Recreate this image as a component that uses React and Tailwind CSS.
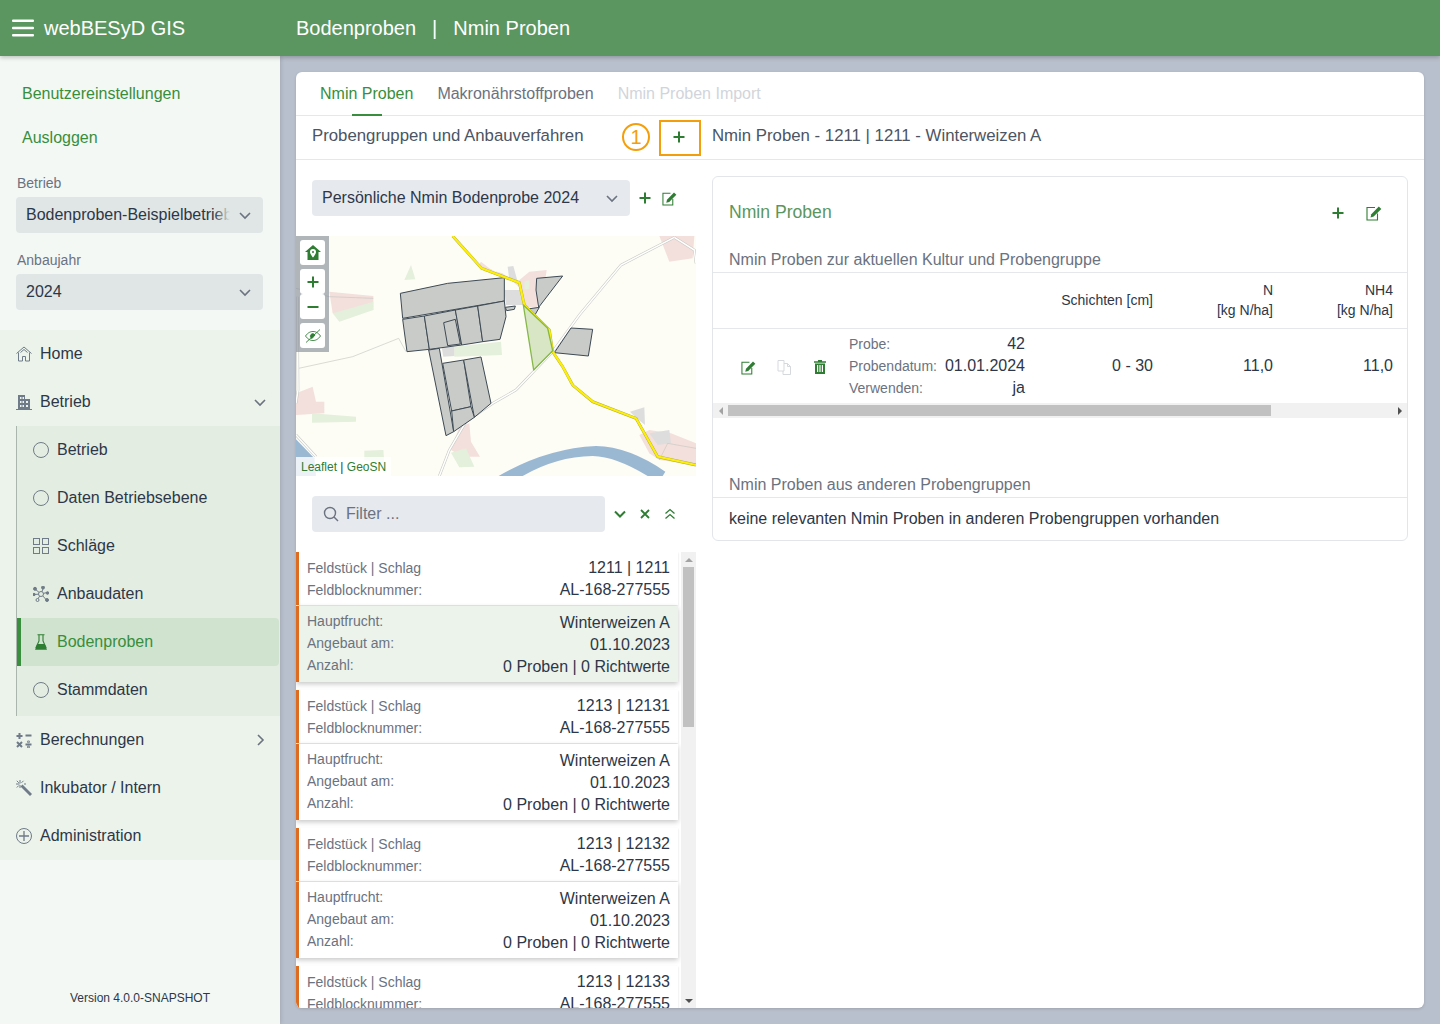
import React from "react";

const G = "#2e7d32";

function Plus({ size = 14, color = G, sw = 2 }) {
  return (
    <svg width={size} height={size} viewBox="0 0 14 14" fill="none" stroke={color} strokeWidth={sw}>
      <path d="M7 1.500v11M1.500 7h11" />
    </svg>
  );
}
function Edit({ size = 16, color = G }) {
  return (
    <svg width={size} height={size} viewBox="0 0 16 16" fill="none">
      <path d="M11.500 8.500v6.500H1V2.500h8" stroke={color} strokeWidth="1.100" />
      <path d="M4.500 12.500l.8-3.200L12.800 1.500l2.500 2.400-7.600 7.700z" fill={color} />
    </svg>
  );
}
function Chevron({ className = "", size = 14, color = "#6b7280", dir = "down" }) {
  const d = dir === "down" ? "M2 5l5 5 5-5" : "M5 2l5 5-5 5";
  return (
    <svg className={className} width={size} height={size} viewBox="0 0 14 14" fill="none" stroke={color} strokeWidth="1.600">
      <path d={d} />
    </svg>
  );
}
function Hamburger() {
  return (
    <svg width="22" height="18" viewBox="0 0 22 18" fill="#fff">
      <rect x="0" y="0.500" width="22" height="2.400" rx="1" />
      <rect x="0" y="7.800" width="22" height="2.400" rx="1" />
      <rect x="0" y="15" width="22" height="2.400" rx="1" />
    </svg>
  );
}
const GR = "#6f7b88";
function HomeIcon() {
  return (
    <svg width="16" height="16" viewBox="0 0 16 16" fill="none" stroke={GR} strokeWidth="1">
      <path d="M0.500 7.500L8 1l7.500 6.500M2.500 6.500v8.500h4v-4.500h3V15h4V6.500M4.500 6.500L8 3.500l3.500 3" />
    </svg>
  );
}
function BuildingIcon() {
  return (
    <svg width="16" height="16" viewBox="0 0 16 16" fill={GR}>
      <path fillRule="evenodd" d="M2 1h7v4h5v10h2v1H0v-1h2zM4 3v2h1.500V3zm2.500 0v2H8V3zM4 7v2h1.500V7zm2.500 0v2H8V7zM4 11v2h1.500v-2zm2.500 0v2H8v-2zM10 7v2h2V7zm0 4v2h2v-2z" />
    </svg>
  );
}
function CircleIcon() {
  return (
    <svg width="16" height="16" viewBox="0 0 16 16" fill="none" stroke={GR} strokeWidth="1">
      <circle cx="8" cy="8" r="7.500" />
    </svg>
  );
}
function GridIcon() {
  return (
    <svg width="16" height="16" viewBox="0 0 16 16" fill="none" stroke={GR} strokeWidth="1">
      <rect x="0.500" y="0.500" width="6" height="6" />
      <rect x="9.500" y="0.500" width="6" height="6" />
      <rect x="0.500" y="9.500" width="6" height="6" />
      <rect x="9.500" y="9.500" width="6" height="6" />
    </svg>
  );
}
function NetworkIcon() {
  return (
    <svg width="16" height="16" viewBox="0 0 16 16" fill={GR} stroke={GR} strokeWidth="1">
      <path d="M8 8L2 3M8 8l2.500-6.500M8 8l6-1.500M8 8l5.500 6M8 8L4.500 13.500M8 8L1 8.500" fill="none" />
      <circle cx="8" cy="8" r="2.500" fill="#e3ede1" />
      <circle cx="2" cy="2.800" r="1.500" />
      <circle cx="10" cy="1.500" r="1.500" />
      <circle cx="14.500" cy="7" r="1.300" />
      <circle cx="14" cy="14" r="1.500" />
      <circle cx="4.500" cy="14" r="1.500" fill="#e3ede1" />
      <circle cx="1" cy="8.500" r="1.200" />
    </svg>
  );
}
function FlaskIcon({ color = G }) {
  return (
    <svg width="14" height="16" viewBox="0 0 14 16" fill="none">
      <path d="M3.500 .8h7M5 .8v6.200L1.800 14M9 .8v6.200l3.200 7" stroke={color} strokeWidth="1.100" />
      <path d="M3.200 10h7.600L13 15.800H1z" fill={color} />
    </svg>
  );
}
function MathIcon() {
  return (
    <svg width="16" height="16" viewBox="0 0 16 16" stroke={GR} strokeWidth="2" fill={GR}>
      <path d="M3.500 1v6M0.500 4h6M9.500 3.500h6M1 10l5 5M6 10l-5 5M9.500 12.500h6" fill="none" />
      <circle cx="12.500" cy="9.800" r="0.400" />
      <circle cx="12.500" cy="15" r="0.400" />
    </svg>
  );
}
function WandIcon() {
  return (
    <svg width="16" height="16" viewBox="0 0 16 16" fill="none" stroke={GR} strokeWidth="1">
      <path d="M5.500 5.500l9.500 9.500" strokeWidth="2.800" />
      <path d="M4 0v3.500M0 4h3.500M.8 .8l2 2M7.500 .8l-2 2M.8 7.500l2-2M4 5v3M8 4h2" />
    </svg>
  );
}
function CirclePlusIcon() {
  return (
    <svg width="16" height="16" viewBox="0 0 16 16" fill="none" stroke={GR} strokeWidth="1">
      <circle cx="8" cy="8" r="7.500" />
      <path d="M8 3v10M3 8h10" strokeWidth="1.300" />
    </svg>
  );
}
function HomePin() {
  return (
    <svg width="16" height="15" viewBox="0 0 16 15" fill={G}>
      <path fillRule="evenodd" d="M8 0L0 7h2.500v8h11V7H16zM8 4a3 3 0 0 0-3 3c0 2 3 5.500 3 5.500S11 9 11 7a3 3 0 0 0-3-3zm0 2a1 1 0 1 1 0 2 1 1 0 0 1 0-2z" />
    </svg>
  );
}
function EyeOff() {
  return (
    <svg width="16" height="14" viewBox="0 0 16 14" fill="none" stroke={G} strokeWidth="0.900">
      <path d="M.5 7C3 3.500 5.500 2.500 8 2.500s5 1 7.500 4.500C13 10.500 10.500 11.500 8 11.500S3 10.500 .5 7z" />
      <path d="M6 5.500a2.500 2.500 0 0 0 1 4l3-3.500a2.500 2.500 0 0 0-4-.5z" fill={G} />
      <path d="M1 13.500L15 .5" />
    </svg>
  );
}
function Search() {
  return (
    <svg width="16" height="16" viewBox="0 0 16 16" fill="none" stroke="#6b7280" strokeWidth="1.400">
      <circle cx="7" cy="7" r="5.500" />
      <path d="M11 11l4 4" />
    </svg>
  );
}
function Trash() {
  return (
    <svg width="12" height="14" viewBox="0 0 12 14" fill={G}>
      <path fillRule="evenodd" d="M4 0h4v1.200h4v1.600H0V1.200h4zM1 3.500h10V14H1zM3 5v7h1.200V5zm2.400 0v7h1.200V5zm2.400 0v7H9V5z" />
    </svg>
  );
}
function Copy() {
  return (
    <svg width="15" height="15" viewBox="0 0 15 15" fill="none" stroke="#d5d9dd" strokeWidth="1">
      <path d="M1 .5h6v10.500H1z" />
      <path d="M7 3.500h3.500l3 3V14.500h-7.500V11M10.500 3.500v3h3" />
    </svg>
  );
}

function Select({ label, value, fade }) {
  return (
    <div className="pl-4 pr-[17px]">
      <div className="ml-px h-[28px] flex items-center text-sm text-[#6b7280] leading-none pb-[1px]">{label}</div>
      <div className="h-9 rounded bg-[#dfe6e5] flex items-center pl-[10px] pr-[11px]">
        <div className="relative flex-1 overflow-hidden whitespace-nowrap text-[#2d3748] mr-[8px]">
          {value}
          {fade && <span className="absolute right-0 top-0 bottom-0 w-4 bg-gradient-to-r from-transparent to-[#dfe6e5]" />}
        </div>
        <Chevron />
      </div>
    </div>
  );
}

function NavRow({ icon, label, chevron }) {
  return (
    <div className="h-12 flex items-center pl-4 pr-[13px] text-[#2d3748]">
      <span className="w-6 flex items-center">{icon}</span>
      <span className="flex-1">{label}</span>
      {chevron}
    </div>
  );
}
function SubRow({ icon, label, active }) {
  if (active) {
    return (
      <div className="h-12 flex items-center pl-3 border-l-4 border-[#388e3c] bg-[#d0e3cf] rounded-r text-[#388e3c]">
        <span className="w-6 flex items-center pl-[1px]">{icon}</span>
        <span>{label}</span>
      </div>
    );
  }
  return (
    <div className="h-12 flex items-center pl-4 text-[#2d3748]">
      <span className="w-6 flex items-center">{icon}</span>
      <span>{label}</span>
    </div>
  );
}

function Sidebar() {
  return (
    <aside className="w-[280px] shrink-0 bg-[#f4f8f5] flex flex-col shadow-[1px_0_4px_rgba(0,0,0,0.12)] relative">
      <div className="pt-4 pl-[22px] text-[#388e3c]">
        <div className="h-11 flex items-center">Benutzereinstellungen</div>
        <div className="h-11 flex items-center">Ausloggen</div>
      </div>
      <div className="mt-[9px]">
        <Select label="Betrieb" value="Bodenproben-Beispielbetrieb" fade />
      </div>
      <div className="mt-[13px]">
        <Select label="Anbaujahr" value="2024" />
      </div>
      <nav className="mt-5 bg-[#ebf3ea]">
        <NavRow icon={<HomeIcon />} label="Home" />
        <NavRow icon={<BuildingIcon />} label="Betrieb" chevron={<Chevron />} />
        <div className="ml-4 border-l border-[#aab5ae] bg-[#e3ede1] pb-[2px] pr-px">
          <SubRow icon={<CircleIcon />} label="Betrieb" />
          <SubRow icon={<CircleIcon />} label="Daten Betriebsebene" />
          <SubRow icon={<GridIcon />} label="Schläge" />
          <SubRow icon={<NetworkIcon />} label="Anbaudaten" />
          <SubRow icon={<FlaskIcon />} label="Bodenproben" active />
          <SubRow icon={<CircleIcon />} label="Stammdaten" />
        </div>
        <NavRow icon={<MathIcon />} label="Berechnungen" chevron={<Chevron dir="right" />} />
        <NavRow icon={<WandIcon />} label="Inkubator / Intern" />
        <NavRow icon={<CirclePlusIcon />} label="Administration" />
      </nav>
      <div className="mt-auto h-[34px] text-center text-xs text-[#2d3748]">Version 4.0.0-SNAPSHOT</div>
    </aside>
  );
}

function MapSvg() {
  const fields = [
    "313,190 455,160 625,143 625,213 320,265",
    "320,268 385,258 400,358 333,365",
    "385,258 478,240 497,345 400,358",
    "443,278 478,268 493,342 455,347",
    "478,240 545,228 560,335 497,345",
    "545,228 625,213 630,260 612,328 560,335",
    "398,360 430,355 473,605 450,617",
    "440,400 503,390 525,530 467,543",
    "503,390 555,381 585,520 535,562",
    "467,543 525,530 535,562 473,605",
    "722,145 800,138 728,232 720,180",
    "695,237 730,232 715,258",
    "825,294 890,298 877,378 775,368",
    "628,232 658,228 655,238 632,242",
  ];
  const pink = [
    "100,185 232,198 232,240 110,250",
    "555,95 580,115 660,158 700,125 752,120 745,170 722,232 690,232 680,180 620,130 545,110",
    "1090,18 1195,18 1190,85 1120,95",
    "0,490 50,470 60,515 85,515 85,550 0,555",
    "1030,615 1060,600 1125,610 1200,640 1200,705 1090,690 1060,670",
    "490,590 520,580 525,635 552,680 500,680 465,660",
  ];
  const green = [
    "110,250 232,215 232,240 130,275",
    "325,150 345,105 358,148",
    "48,550 180,560 180,575 48,578",
    "205,662 262,660 265,700 205,690",
    "475,350 615,335 618,375 475,380",
    "685,155 700,150 700,178 685,178",
    "465,668 510,655 535,710 490,712",
  ];
  const gray = [
    "635,110 652,108 665,155 640,150",
    "625,180 680,180 685,225 630,225",
    "437,352 475,350 475,378 442,380",
    "1002,545 1045,532 1047,585 1022,565",
    "1060,610 1120,600 1125,640 1085,645",
  ];
  const road1 = "1135,22 975,105 850,255 770,365 660,480 590,520 510,575 460,660 430,738";
  const road2 = "1135,22 1195,60 1200,100";
  const road3 = "4,200 6,480 0,520";
  const road4 = "0,615 60,680";
  const yellow = "470,18 557,115 670,158 685,225 760,300 770,365 800,410 830,465 890,515 1020,565 1085,680 1200,705";
  return (
    <svg className="absolute inset-0" width="400" height="240" viewBox="0 18 1200 720">
      <rect x="0" y="18" width="1200" height="720" fill="#fdfdf6" />
      {pink.map((p, i) => <polygon key={i} points={p} fill="#f3e0dc" />)}
      {green.map((p, i) => <polygon key={i} points={p} fill="#e4efdc" />)}
      {gray.map((p, i) => <polygon key={i} points={p} fill="#dddddd" />)}
      <path d="M608 738Q750 655 900 648Q1000 650 1108 725L1100 738L1055 738Q960 680 890 678Q780 680 680 738Z" fill="#9bb8d3" />
      <path d="M0 628L55 685L60 738L0 738Z" fill="#9bb8d3" />
      <polyline points="8,415 170,380 308,325 330,365" fill="none" stroke="#c9c9c2" strokeWidth="2" />
      <polyline points="0,175 100,200 232,205" fill="none" stroke="#c9c9c2" strokeWidth="2" />
      <polyline points="1090,690 1115,640 1200,655" fill="none" stroke="#c9c9c2" strokeWidth="2" />
      {[road1, road2, road3, road4].map((p, i) => (
        <g key={i}>
          <polyline points={p} fill="none" stroke="#c8c8c3" strokeWidth="8" />
          <polyline points={p} fill="none" stroke="#ffffff" strokeWidth="4.500" />
        </g>
      ))}
      {fields.map((p, i) => <polygon key={i} points={p} fill="#c9cbc8" stroke="#3e4a54" strokeWidth="3" strokeLinejoin="round" />)}
      <polyline points={yellow} fill="none" stroke="#a8a65a" strokeWidth="8.500" />
      <polyline points={yellow} fill="none" stroke="#fff000" strokeWidth="6.500" />
      <polygon points="682,225 755,295 770,362 713,420" fill="#d9e6c5" stroke="#86b84a" strokeWidth="4" strokeLinejoin="round" />
    </svg>
  );
}

function MapCtl({ children }) {
  return <div className="w-[25px] h-[25px] bg-white rounded-[3px] flex items-center justify-center">{children}</div>;
}

function MapPanel() {
  return (
    <div className="relative h-60 overflow-hidden">
      <MapSvg />
      <div className="absolute left-0 top-0 w-[33px] h-[116px] bg-[#8d96a0]/70 pl-1 pt-1 flex flex-col">
        <MapCtl><HomePin /></MapCtl>
        <div className="mt-1"><MapCtl><Plus size={14} /></MapCtl></div>
        <MapCtl><svg width="14" height="14" viewBox="0 0 14 14" stroke={G} strokeWidth="2"><path d="M1.500 7h11" /></svg></MapCtl>
        <div className="mt-1"><MapCtl><EyeOff /></MapCtl></div>
      </div>
      <div className="absolute left-0 bottom-0 h-[19px] bg-white/80 pl-[5px] pr-[5px] flex items-center text-xs text-[#2d3748]">
        <span className="text-[#2e7d32]">Leaflet</span>&nbsp;|&nbsp;<span className="text-[#2e7d32]">GeoSN</span>
      </div>
    </div>
  );
}

function KV({ k, v }) {
  return (
    <div className="h-[22px] flex items-center justify-between whitespace-nowrap">
      <span className="text-sm text-[#6b7280]">{k}</span>
      <span className="text-[#2d3748]">{v}</span>
    </div>
  );
}
function KVB({ k, v }) {
  return (
    <div className="h-[22px] flex justify-between whitespace-nowrap">
      <span className="text-sm text-[#6b7280]">{k}</span>
      <span className="text-[#2d3748]">{v}</span>
    </div>
  );
}

function FieldCard({ num, selected }) {
  return (
    <div className="mb-2 w-[382px]">
      <div className="h-[53px] bg-white border-l-[3px] border-[#dd6b20] pl-2 pr-2 pt-[5px] shadow-[0_1px_2px_rgba(0,0,0,0.14)]">
        <KV k="Feldstück | Schlag" v={num} />
        <KV k="Feldblocknummer:" v="AL-168-277555" />
      </div>
      <div className={`mt-px h-[76px] border-l-[3px] border-[#dd6b20] pl-2 pr-2 pt-[5px] shadow-[0_2px_5px_rgba(0,0,0,0.22)] ${selected ? "bg-[#ebf3ea]" : "bg-white"}`}>
        <KVB k="Hauptfrucht:" v="Winterweizen A" />
        <KVB k="Angebaut am:" v="01.10.2023" />
        <KVB k="Anzahl:" v="0 Proben | 0 Richtwerte" />
      </div>
    </div>
  );
}

function LeftColumn() {
  return (
    <div className="w-[400px] shrink-0 flex flex-col min-h-0">
      <div className="px-4 pt-5 pb-5 flex items-center">
        <div className="w-[318px] h-9 rounded bg-[#e6e9ee] flex items-center pl-[10px] pr-[11px] text-[#2d3748]">
          <span className="flex-1 whitespace-nowrap">Persönliche Nmin Bodenprobe 2024</span>
          <Chevron />
        </div>
        <div className="ml-2 flex"><Plus size={14} /></div>
        <div className="ml-[10px] flex"><Edit size={15} /></div>
      </div>
      <MapPanel />
      <div className="px-4 pt-5 pb-5 flex items-center">
        <div className="w-[293px] h-9 rounded bg-[#e6e9ee] flex items-center pl-[11px] text-[#6b7280]">
          <Search />
          <span className="ml-[7px]">Filter ...</span>
        </div>
        <svg className="ml-[9px]" width="12" height="12" viewBox="0 0 12 12" fill="none" stroke={G} strokeWidth="2"><path d="M1 3.500l5 5 5-5" /></svg>
        <svg className="ml-[14px]" width="10" height="10" viewBox="0 0 10 10" fill="none" stroke={G} strokeWidth="1.800"><path d="M1 1l8 8M9 1l-8 8" /></svg>
        <svg className="ml-[14px]" width="12" height="12" viewBox="0 0 12 12" fill="none" stroke={G} strokeWidth="1.300"><path d="M1.500 5.500L6 1.500l4.500 4M1.500 10.500L6 6.500l4.500 4" /></svg>
      </div>
      <div className="flex-1 min-h-0 flex overflow-hidden">
        <div className="flex-1 overflow-hidden">
          <FieldCard num="1211 | 1211" selected />
          <FieldCard num="1213 | 12131" />
          <FieldCard num="1213 | 12132" />
          <FieldCard num="1213 | 12133" />
        </div>
        <div className="w-[15px] shrink-0 bg-[#f1f1f1] flex flex-col items-center">
          <div className="h-[15px] flex items-center justify-center">
            <span className="block w-0 h-0 border-x-[4px] border-x-transparent border-b-[4px] border-b-[#a3a3a3]" />
          </div>
          <div className="w-[11px] h-[160px] bg-[#c1c1c1]" />
          <div className="mt-auto h-[15px] flex items-center justify-center">
            <span className="block w-0 h-0 border-x-[4px] border-x-transparent border-t-[4px] border-t-[#505050]" />
          </div>
        </div>
      </div>
    </div>
  );
}

function RightCard() {
  return (
    <div className="ml-4 mt-4 w-[696px] h-[365px] border border-[#e2e5e9] rounded-md flex flex-col overflow-hidden">
      <div className="h-[72px] pl-4 flex items-center">
        <span className="flex-1 text-[17.6px] text-[#5b9660] pb-[2px]">Nmin Proben</span>
        <Plus size={14} />
        <span className="ml-[21px] mr-[25px] flex"><Edit size={16} /></span>
      </div>
      <div className="h-[24px] pl-4 text-[#6b7280] flex items-center border-b border-[#e5e7eb] pb-[1px]">Nmin Proben zur aktuellen Kultur und Probengruppe</div>
      <div className="h-[56px] flex items-center justify-end border-b border-[#e5e7eb] text-sm text-[#2d3748] pr-[14px] pb-[2px] leading-5 text-right">
        <div className="w-[120px]">Schichten [cm]</div>
        <div className="w-[120px]">N<br />[kg N/ha]</div>
        <div className="w-[120px]">NH4<br />[kg N/ha]</div>
      </div>
      <div className="h-[74px] flex items-center pr-[14px] text-[#2d3748]">
        <div className="w-[136px] shrink-0 flex items-center pl-7 pt-[2px]">
          <span className="w-9 flex"><Edit size={15} /></span>
          <span className="w-9 flex"><Copy /></span>
          <span className="w-9 flex pl-px"><Trash /></span>
        </div>
        <div className="w-[176px] shrink-0">
          <KV k="Probe:" v="42" />
          <KV k="Probendatum:" v="01.01.2024" />
          <KV k="Verwenden:" v="ja" />
        </div>
        <div className="w-[128px] text-right">0 - 30</div>
        <div className="w-[120px] text-right">11,0</div>
        <div className="w-[120px] text-right">11,0</div>
      </div>
      <div className="h-[15px] bg-[#f1f1f1] flex items-center">
        <div className="w-[15px] flex justify-center">
          <span className="block w-0 h-0 border-y-[4px] border-y-transparent border-r-[4px] border-r-[#a3a3a3]" />
        </div>
        <div className="w-[543px] h-[11px] bg-[#c1c1c1]" />
        <div className="ml-auto w-[15px] flex justify-center">
          <span className="block w-0 h-0 border-y-[4px] border-y-transparent border-l-[4px] border-l-[#505050]" />
        </div>
      </div>
      <div className="h-[80px] pl-4 flex items-end text-[#6b7280] border-b border-[#e5e7eb]">
        <span>Nmin Proben aus anderen Probengruppen</span>
      </div>
      <div className="flex-1 pl-4 flex items-center text-[#2d3748]">keine relevanten Nmin Proben in anderen Probengruppen vorhanden</div>
    </div>
  );
}

export default function App() {
  return (
    <div className="w-full h-[1024px] overflow-hidden flex flex-col font-['Liberation_Sans',sans-serif] bg-[#b9c0cd]">
      <header className="h-14 shrink-0 bg-[#5b9660] text-white flex items-center text-xl shadow-[0_2px_4px_rgba(0,0,0,0.2)] relative z-10">
        <div className="w-[280px] shrink-0 pl-3 flex items-center">
          <Hamburger />
          <span className="ml-[10px]">webBESyD GIS</span>
        </div>
        <div className="pl-4 flex whitespace-nowrap">
          <span>Bodenproben</span>
          <span className="ml-4">|</span>
          <span className="ml-4">Nmin Proben</span>
        </div>
      </header>
      <div className="flex-1 min-h-0 flex">
        <Sidebar />
        <main className="flex-1 min-w-0 p-4">
          <div className="h-full bg-white rounded-md flex flex-col overflow-hidden shadow-[0_1px_3px_rgba(0,0,0,0.15)]">
            <div className="h-11 shrink-0 flex px-6 gap-6 border-b border-[#e5e7eb] whitespace-nowrap">
              <div className="relative h-full flex items-center text-[#388e3c]">
                Nmin Proben
                <span className="absolute left-8 bottom-[-1px] w-[30px] h-[2px] bg-[#388e3c]" />
              </div>
              <div className="h-full flex items-center text-[#6b7280]">Makronährstoffproben</div>
              <div className="h-full flex items-center text-[#d1d5db]">Nmin Proben Import</div>
            </div>
            <div className="h-11 shrink-0 flex items-center border-b border-[#e5e7eb] pl-4 text-[16.8px] text-[#4b5563]">
              <span className="w-[310px] whitespace-nowrap pb-[4px]">Probengruppen und Anbauverfahren</span>
              <span className="w-7 h-7 mb-[2px] rounded-full border-2 border-[#f59e0b] text-[#f59e0b] text-xl font-light flex items-center justify-center">1</span>
              <span className="ml-[9px] w-[42px] h-9 border-2 border-[#f59e0b] flex items-center justify-center pr-[2px] pb-[2px]"><Plus size={14} /></span>
              <span className="ml-[11px] whitespace-nowrap pb-[4px]">Nmin Proben - 1211 | 1211 - Winterweizen A</span>
            </div>
            <div className="flex-1 min-h-0 flex">
              <LeftColumn />
              <div><RightCard /></div>
            </div>
          </div>
        </main>
      </div>
    </div>
  );
}
